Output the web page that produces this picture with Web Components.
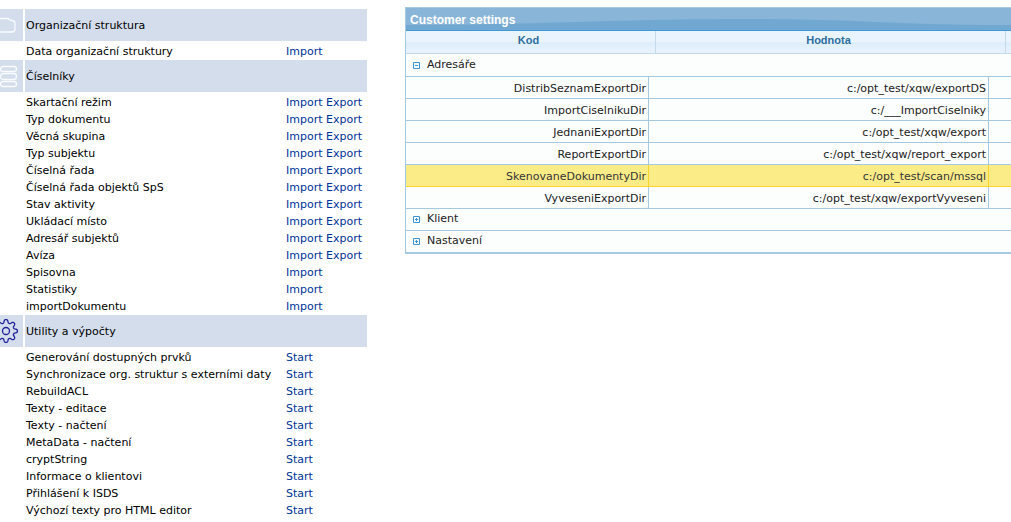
<!DOCTYPE html>
<html lang="cs">
<head>
<meta charset="utf-8">
<title>Customer settings</title>
<style>
body { margin: 0; background: #fff; color: #000; font: 11px/15px "DejaVu Sans", Verdana, sans-serif; }
</style>
</head>
<body>
<admin-page></admin-page>
<script>
const define = (name, render) => customElements.define(name, class extends HTMLElement {
  connectedCallback() {
    if (!this.shadowRoot) this.attachShadow({ mode: "open" }).innerHTML = render(this);
  }
});

const sections = [
  { title: "Organizační struktura", icon: "folder", rows: [["Data organizační struktury", "Import"]] },
  { title: "Číselníky", icon: "list", rows: [
    ...["Skartační režim", "Typ dokumentu", "Věcná skupina", "Typ subjektu", "Číselná řada",
      "Číselná řada objektů SpS", "Stav aktivity", "Ukládací místo", "Adresář subjektů", "Avíza"]
      .map(name => [name, "Import", "Export"]),
    ["Spisovna", "Import"], ["Statistiky", "Import"], ["importDokumentu", "Import"]] },
  { title: "Utility a výpočty", icon: "gear", rows:
    ["Generování dostupných prvků", "Synchronizace org. struktur s externími daty", "RebuildACL",
      "Texty - editace", "Texty - načtení", "MetaData - načtení", "cryptString",
      "Informace o klientovi", "Přihlášení k ISDS", "Výchozí texty pro HTML editor"]
      .map(name => [name, "Start"]) }
];

const settings = [
  ["DistribSeznamExportDir", "c:/opt_test/xqw/exportDS"],
  ["ImportCiselnikuDir", "c:/___ImportCiselniky"],
  ["JednaniExportDir", "c:/opt_test/xqw/export"],
  ["ReportExportDir", "c:/opt_test/xqw/report_export"],
  ["SkenovaneDokumentyDir", "c:/opt_test/scan/mssql"],
  ["VyveseniExportDir", "c:/opt_test/xqw/exportVyveseni"]
];

/* Closed outline of a gear with eight rounded teeth, centred on 6,16. */
function gearPath() {
  const pts = [];
  for (let i = 0; i <= 240; i++) {
    const a = i / 240 * Math.PI * 2;
    const r = 9.8 + Math.tanh(1.5 * Math.cos(8 * a)) * 1.8;
    pts.push((6 + r * Math.cos(a)).toFixed(2) + " " + (16 + r * Math.sin(a)).toFixed(2));
  }
  return "M" + pts.join("L") + "Z";
}

const icons = {
  folder: `<path d="M-6 9.5H7q1.5 0 2.5 1t2.5 1q3 0 3 3v5.500q0 3-3 3H-6" stroke="#f8fbff"/>`,
  list: `<g stroke="#f8fbff"><rect x="0.5" y="6.5" width="16" height="5" rx="2.5"/><rect x="0.5" y="13.5" width="16" height="6" rx="3"/><rect x="0.5" y="21.5" width="16" height="5" rx="2.5"/></g>`,
  gear: `<g stroke="#20209a"><path d="${gearPath()}"/><circle cx="6" cy="16" r="3.5"/></g>`
};

define("section-icon", el => `
<style>:host { display: block; } svg { display: block; width: 23px; height: 32px; }</style>
<svg viewBox="0 0 23 32" fill="none" stroke-width="1.3" stroke-linejoin="round" aria-hidden="true">${icons[el.getAttribute("name")]}</svg>`);

define("task-list", () => `
<style>
:host { display: block; }
table { border-spacing: 0 2px; border-collapse: separate; table-layout: fixed; width: 367px; }
.icon { width: 25px; } .links { width: 81px; }
th, td { padding: 0; text-align: left; font-weight: normal; white-space: nowrap; }
.head th { height: 32px; padding-left: 1px; background: #d4ddeb; }
.head td { background: linear-gradient(90deg, #d4ddeb 23px, #fff 23px); }
.task > * { height: 15px; line-height: 13px; padding-top: 2px; box-sizing: border-box; }
.task th { padding-left: 1px; }
a { color: #039; text-decoration: none; }
</style>
<table>
<colgroup><col class="icon"><col><col class="links"></colgroup>
${sections.map(s => `<tbody>
<tr class="head"><td><section-icon name="${s.icon}"></section-icon></td><th colspan="2" scope="rowgroup">${s.title}</th></tr>
${s.rows.map(([name, ...links]) => `<tr class="task"><td></td><th scope="row">${name}</th><td>${links.map(l => `<a href="#">${l}</a>`).join(" ")}</td></tr>`).join("")}
</tbody>`).join("")}
</table>`);

define("panel-title", () => `
<style>
:host { display: block; position: relative; background: #89b5d8; border-bottom: 1px solid #4297d7; }
svg { position: absolute; inset: 0; width: 100%; height: 100%; }
h2 { position: relative; margin: 0; padding: 5px 4px 3px; font: bold 12px/14px "Liberation Sans", Arial, sans-serif; color: #fff; }
</style>
<svg viewBox="0 0 606 22" preserveAspectRatio="none" aria-hidden="true"><path d="M0 17C120 17 190 12 320 11S480 17 606 17V22H0Z" fill="#70a8d2"/></svg>
<h2><slot></slot></h2>`);

define("group-toggle", el => `
<style>
:host { display: flex; align-items: center; gap: 7px; padding-left: 7px; }
button { display: block; width: 7px; height: 7px; padding: 0; border: 0; background: none; }
svg { display: block; }
.box { padding-top: 2px; }
</style>
<div class="box"><button id="b" aria-labelledby="t" aria-expanded="${el.hasAttribute("open")}"><svg width="7" height="7" viewBox="0 0 7 7" fill="none" stroke="#3d96d9" aria-hidden="true"><path d="M.5 .5h6v6h-6zM2 3.5h3${el.hasAttribute("open") ? "" : "M3.5 2v3"}"/></svg></button></div>
<span id="t"><slot></slot></span>`);

define("settings-grid", () => `
<style>
:host { display: block; border: 1px solid #a6c9e2; border-right: 0; overflow: hidden; background: #fcfdfd; color: #222; }
table { width: 100%; table-layout: fixed; border-collapse: separate; border-spacing: 0; }
.key { width: 250px; } .value { width: 350px; }
.body .key { width: 243px; } .body .value { width: 340px; }
th, td { box-sizing: border-box; padding: 0; white-space: nowrap; overflow: hidden; }
thead th { height: 23px; padding: 0 4px 4px 0; border-right: 1px solid #c5dbec; border-bottom: 1px solid #c5dbec; background: linear-gradient(#e9f4fe 50%, #deedfb 50%, #e8f3fe); color: #2e6e9e; font: bold 11px/14px "Liberation Sans", Arial, sans-serif; }
thead th:last-child { border-right: 0; }
.body td { height: 22px; border-bottom: 1px solid #a6c9e2; }
.body .first td { height: 23px; }
.body .item td { text-align: right; padding: 2px 2px 0; border-right: 1px solid #a6c9e2; }
.body .item td:last-child { border-right: 0; }
.body .selected td { background: #fbec88; border-color: #fad42e; color: #363636; }
.group td { padding-bottom: 2px; }
</style>
<panel-title>Customer settings</panel-title>
<table>
<colgroup><col class="key"><col class="value"><col></colgroup>
<thead><tr><th scope="col">Kod</th><th scope="col">Hodnota</th><th></th></tr></thead>
</table>
<table class="body">
<colgroup><col class="key"><col class="value"><col></colgroup>
<tbody>
<tr class="group first"><td colspan="3"><group-toggle open>Adresáře</group-toggle></td></tr>
${settings.map(([k, v]) => `<tr class="item${k === "SkenovaneDokumentyDir" ? " selected" : ""}"><td>${k}</td><td>${v}</td><td></td></tr>`).join("")}
<tr class="group"><td colspan="3"><group-toggle>Klient</group-toggle></td></tr>
<tr class="group"><td colspan="3"><group-toggle>Nastavení</group-toggle></td></tr>
</tbody>
</table>`);

define("admin-page", () => `
<style>
:host { display: flex; align-items: flex-start; gap: 38px; padding-top: 7px; }
task-list { flex: none; }
settings-grid { flex: 1; min-width: 0; }
</style>
<task-list></task-list>
<settings-grid></settings-grid>`);
</script>
</body>
</html>
